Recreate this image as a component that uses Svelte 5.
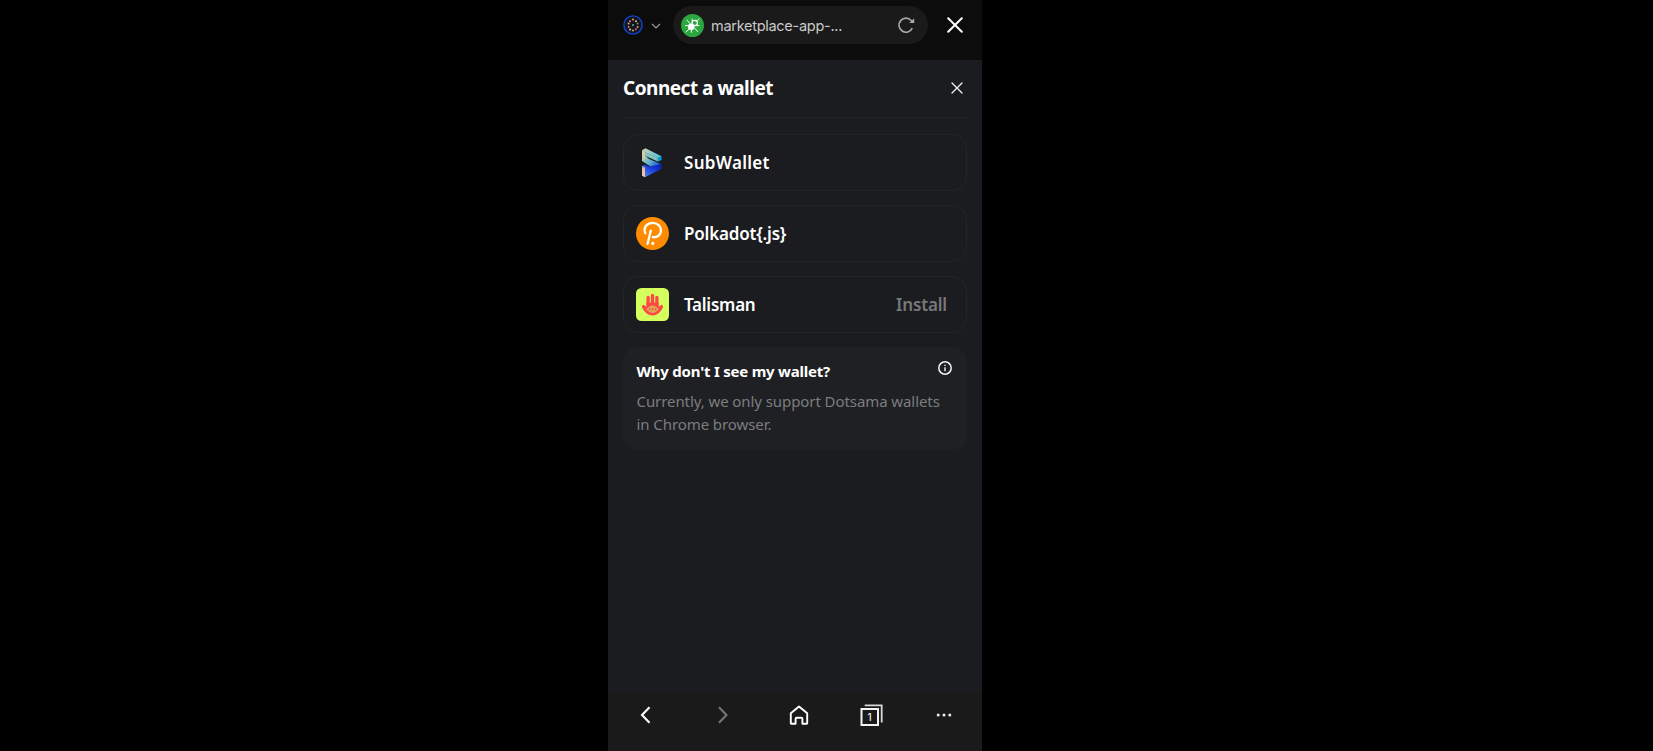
<script>
  const wallets = [
    { id: 'sub', name: 'SubWallet', spacing: 0.3 },
    { id: 'dot', name: 'Polkadot{.js}', spacing: -0.2 },
    { id: 'tal', name: 'Talisman', spacing: -0.24, action: 'Install' }
  ];
  const avatarDots = [
    [10, 4.6, '#e6a36a'], [7, 6.3, '#d77b9c'], [13, 6.3, '#d8c98a'],
    [5.6, 8.6, '#c7b583'], [5.6, 12, '#c27ab0'], [10, 10, '#58b0a0'],
    [14.6, 8.6, '#9a7c6d'], [14.6, 12, '#d8a37c'],
    [7.1, 14.4, '#d9cfb3'], [12.9, 14.2, '#bd7199'],
    [10, 15.6, '#d7a276']
  ];
</script>

<div class="screen">
  <main class="phone">
    <header class="browser">
      <svg class="avatar" viewBox="0 0 20 20">
        <circle cx="10" cy="10" r="9.1" fill="#15151a" stroke="#0b46d8" stroke-width="1.4" />
        {#each avatarDots as [x, y, fill]}
          <circle cx={x} cy={y} r="1" {fill} />
        {/each}
      </svg>
      <svg class="caret" viewBox="0 0 10 10"><path d="M1 3l4 4 4-4" fill="none" stroke="#999" stroke-width="1.2" /></svg>
      <div class="address">
        <svg class="site" viewBox="0 0 23 23">
          <circle cx="11.5" cy="11.5" r="11.5" fill="#2ca63e" />
          <g stroke="#fff" fill="none" stroke-linecap="round" stroke-width="1">
            <path d="M5 18L9 14.2M15.4 7.4L18 4.800M6 6.200l3 3.300M14 14.500l2.600 3M4.500 11.600h3M11.200 5v3M10.400 15v3.300M15.800 11.600h2.200" />
            <circle cx="13.700" cy="9" r="2.700" stroke-width="1.200" />
          </g>
          <circle cx="10.300" cy="12.700" r="3.300" fill="#fff" />
        </svg>
        <span class="url">marketplace-app-...</span>
        <svg class="reload" viewBox="0 0 18 18">
          <path d="M15.300 12.200A7 7 0 1 1 14.200 4.500L15.600 6" fill="none" stroke="#aaa" stroke-width="1.600" />
          <path d="M17.200 2.300V7h-4.900z" fill="#aaa" />
        </svg>
      </div>
      <svg class="quit" viewBox="0 0 16 16"><path d="M1.200 1.200l13.600 13.600M14.800 1.200L1.200 14.800" stroke="#fff" stroke-width="2" stroke-linecap="round" /></svg>
    </header>

    <section class="content">
      <div class="heading">
        <h1>Connect a wallet</h1>
        <svg viewBox="0 0 12 12"><path d="M1 1l10 10M11 1L1 11" stroke="#eee" stroke-width="1.400" stroke-linecap="round" /></svg>
      </div>

      <div class="list">
        {#each wallets as wallet}
          <div class="wallet">
            {#if wallet.id === 'sub'}
              <svg class="logo" viewBox="0 0 33 33">
                <defs>
                  <linearGradient id="side" x1="0" y1="0" x2="0" y2="1"><stop offset="0" stop-color="#e5cfad" /><stop offset="1" stop-color="#b5c9a7" /></linearGradient>
                  <linearGradient id="top" x1="0" y1="0" x2="1" y2="0.4"><stop offset="0" stop-color="#ddcfb0" /><stop offset="1" stop-color="#54c8d8" /></linearGradient>
                  <linearGradient id="mid" x1="0" y1="0" x2="1" y2="0.5"><stop offset="0" stop-color="#b4d4b2" /><stop offset="0.5" stop-color="#65b4c8" /><stop offset="1" stop-color="#1c50d8" /></linearGradient>
                  <linearGradient id="low" x1="0" y1="1" x2="1" y2="0"><stop offset="0" stop-color="#5c8cf0" /><stop offset="0.55" stop-color="#1b40dc" /><stop offset="1" stop-color="#0719a8" /></linearGradient>
                  <linearGradient id="bar" x1="0" y1="0" x2="0" y2="1"><stop offset="0" stop-color="#6f8cdc" /><stop offset="0.3" stop-color="#e9bea0" /><stop offset="1" stop-color="#f2c9ab" /></linearGradient>
                </defs>
                <path d="M6 15V10.500L9 9.500 13 12.900 25.500 18.200 22 22 14.500 20.500z" fill="url(#mid)" />
                <path d="M6 4.300L9.500 2.300 25.500 10.300 21.800 12.200 9 6.300z" fill="url(#top)" />
                <path d="M6 4.300l3 1.600v7.800L6 15z" fill="url(#side)" />
                <path d="M9 6.100l12.800 6v3.400L9 9.700z" fill="#86c3bd" />
                <path d="M21.800 12.100l3.700-1.800v3.600l-3.700 1.900z" fill="#079bd6" />
                <path d="M6 19.700l3-1.200 3.300 2 13.200-2.300v4.500L9 31.200V22z" fill="url(#low)" />
                <path d="M6 19.700l3 1.600v9.900l-3-1.500z" fill="url(#bar)" />
              </svg>
            {:else if wallet.id === 'dot'}
              <svg class="logo" viewBox="0 0 33 33">
                <circle cx="16.500" cy="16.500" r="16.500" fill="#ff8c00" />
                <path d="M9.300 16.200C6.800 10.800 11 5.800 16.500 5.800c5.200 0 8.500 3.600 8.500 7.600 0 4.400-3.600 7.300-8.200 6.800M14.800 13.600L11.600 26.800" fill="none" stroke="#fff" stroke-width="2.300" stroke-linecap="round" />
                <circle cx="16.800" cy="26.300" r="1.600" fill="#fff" />
              </svg>
            {:else}
              <svg class="logo" viewBox="0 0 33 33">
                <rect width="33" height="33" rx="5.500" fill="#d5ff5c" />
                <g stroke="#fd4848" stroke-width="3.300" stroke-linecap="round" fill="none">
                  <path d="M12.100 9.500v10M16.500 7.400v12M20.900 9.500v10M7.600 18.600L12 23M25.400 18.600L21 23" />
                </g>
                <path d="M10.500 14.500h12v5.500l4.500-1c-2 4.500-5.500 8.500-10.500 8.500S8 23.500 6 19l4.500 1z" fill="#fd4848" />
                <g fill="none" stroke="#dcae51" stroke-width="1.500">
                  <path d="M11.200 21.200q5.300-6 10.600 0q-5.300 6-10.600 0z" />
                  <circle cx="16.500" cy="21.200" r="1.800" />
                </g>
              </svg>
            {/if}
            <span class="name" style="letter-spacing: {wallet.spacing}px">{wallet.name}</span>
            {#if wallet.action}<span class="action">{wallet.action}</span>{/if}
          </div>
        {/each}
      </div>

      <aside class="note">
        <div class="note-head">
          <h2>Why don't I see my wallet?</h2>
          <svg viewBox="0 0 14 14">
            <circle cx="7" cy="7" r="6.200" fill="none" stroke="#f4f4f4" stroke-width="1.500" />
            <path d="M7 6.300v4M7 3.700v1.400" stroke="#f4f4f4" stroke-width="1.400" />
          </svg>
        </div>
        <p>Currently, we only support Dotsama wallets<br />in Chrome browser.</p>
      </aside>
    </section>

    <nav>
      <svg viewBox="0 0 24 24"><path d="M15.500 4.200L8 12l7.500 7.800" fill="none" stroke="#fff" stroke-width="2.100" /></svg>
      <svg viewBox="0 0 24 24"><path d="M8 4.200l7.500 7.800L8 19.800" fill="none" stroke="#777" stroke-width="2" /></svg>
      <svg viewBox="0 0 24 24"><path d="M3.800 10.300L12 3.600l8.200 6.700v10q0 .5-.5.500h-4.300v-5q0-1-1-1H9.600q-1 0-1 1v5H4.300q-.5 0-.5-.5z" fill="none" stroke="#fff" stroke-width="1.900" stroke-linejoin="round" /></svg>
      <div class="tabs">
        <svg viewBox="0 0 24 24">
          <rect x="1.500" y="6" width="16.500" height="16" fill="none" stroke="#f2f2f2" stroke-width="2" />
          <path d="M4.700 2.300h17v17.200" fill="none" stroke="#d8d8d8" stroke-width="1.800" />
        </svg>
        <span>1</span>
      </div>
      <svg viewBox="0 0 24 24" fill="#eee"><circle cx="6.200" cy="12" r="1.500" /><circle cx="12" cy="12" r="1.500" /><circle cx="17.800" cy="12" r="1.500" /></svg>
    </nav>
  </main>
</div>

<style>
  :global(body) { margin: 0; background: #000; }
  * { box-sizing: border-box; }
  svg { display: block; flex: none; }
  h1, h2, p { margin: 0; }
  .screen { height: 751px; display: flex; padding-left: 608px; background: #000; overflow: hidden; }
  .phone { width: 374px; display: flex; flex-direction: column; background: #0c0c0c; font-family: "Noto Sans", sans-serif; }
  .browser { height: 60px; padding: 6px 19px 0 15px; display: flex; align-items: flex-start; }
  .avatar { width: 20px; height: 20px; margin-top: 9px; }
  .caret { width: 10px; height: 10px; margin: 15px 0 0 8px; }
  .address { width: 255px; height: 38px; margin-left: 12px; padding: 0 13px 0 8px; border-radius: 19px; background: #1a1a1a; display: flex; align-items: center; }
  .site { width: 23px; height: 23px; }
  .url { margin: 2px 0 0 7px; color: #c9c9c9; font: 14.500px/20px Inter, sans-serif; letter-spacing: -0.28px; white-space: nowrap; }
  .reload { width: 18px; height: 18px; margin-left: auto; }
  .quit { width: 16px; height: 16px; margin: 11px 0 0 auto; }
  .content { flex: 1; padding: 0 15px; background: #1b1c20; }
  .heading { height: 58px; padding: 0 4px 1px 0; border-bottom: 1px solid #232428; display: flex; align-items: center; justify-content: space-between; }
  h1 { color: #fff; font-size: 19px; line-height: 28px; font-weight: 700; letter-spacing: -0.5px; white-space: nowrap; }
  .heading svg { width: 12px; height: 12px; }
  .list { display: flex; flex-direction: column; gap: 14px; margin-top: 16px; }
  .wallet { height: 57px; border: 1px solid #242529; border-radius: 15px; padding: 0 19px 0 11.5px; display: flex; align-items: center; }
  .logo { width: 33px; height: 33px; }
  .name { margin-left: 15.5px; color: #fff; font-size: 17px; font-weight: 600; }
  .action { margin-left: auto; color: #77787a; font-size: 17px; font-weight: 600; letter-spacing: -0.15px; }
  .note { height: 103px; margin-top: 14px; padding: 14px 14px 14px 13.5px; border-radius: 15px; background: #1f2023; }
  .note-head { display: flex; justify-content: space-between; }
  .note-head svg { width: 14px; height: 14px; margin-right: 1px; }
  h2 { color: #fff; font-size: 15px; line-height: 20px; font-weight: 700; letter-spacing: -0.22px; white-space: nowrap; }
  p { margin-top: 9px; color: #7c7d7f; font-size: 15px; line-height: 23px; letter-spacing: -0.08px; white-space: nowrap; }
  nav { height: 59px; padding: 11px 26px 0; background: #1a1a1a; display: grid; grid-template-columns: 77px 76px 73px 72px 24px; align-items: start; }
  nav > svg, .tabs svg { width: 24px; height: 24px; }
  .tabs { position: relative; width: 24px; }
  .tabs span { position: absolute; left: 1px; top: 6px; width: 17px; text-align: center; color: #eee; font: 500 10px/16px Inter, sans-serif; }
</style>
